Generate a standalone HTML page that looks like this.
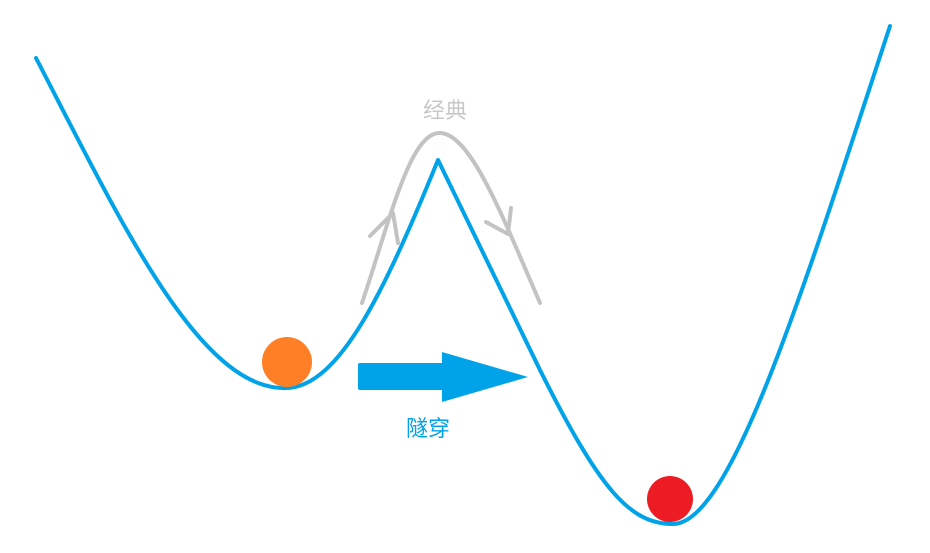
<!DOCTYPE html>
<html><head><style>
html,body{margin:0;padding:0;background:#fff;width:930px;height:553px;overflow:hidden}
svg{display:block}
text{font-family:"Liberation Sans","Noto Sans CJK SC",sans-serif;font-size:22px}
</style></head><body>
<svg width="930" height="553" viewBox="0 0 930 553">
<path d="M36,58 C120,220 200,392 287,388 C340,386 385,290 438,160 L540,370 C600,490 630,524 673,524 C730,524 800,300 890,26" fill="none" stroke="#00a2e8" stroke-width="4" stroke-linecap="round" stroke-linejoin="round"/>
<path d="M362,303 C390,220 410,132 440,133 C470,134 500,210 540,303" fill="none" stroke="#c3c3c3" stroke-width="4" stroke-linecap="round"/>
<path d="M370,236 L393,213 L398,243" fill="none" stroke="#c3c3c3" stroke-width="4" stroke-linecap="round" stroke-linejoin="round"/>
<path d="M486,222 L508,234 L511,208" fill="none" stroke="#c3c3c3" stroke-width="4" stroke-linecap="round" stroke-linejoin="round"/>
<circle cx="287" cy="362" r="25" fill="#ff7f27"/>
<circle cx="670" cy="499" r="23" fill="#ed1c24"/>
<rect x="358" y="363" width="86" height="27" rx="2" fill="#00a2e8"/>
<path d="M442,352 L528,377 L442,402 Z" fill="#00a2e8"/>
<text x="445" y="118" text-anchor="middle" fill="#c8c8c8">经典</text>
<text x="428" y="436" text-anchor="middle" fill="#00a2e8">隧穿</text>
</svg>
</body></html>
